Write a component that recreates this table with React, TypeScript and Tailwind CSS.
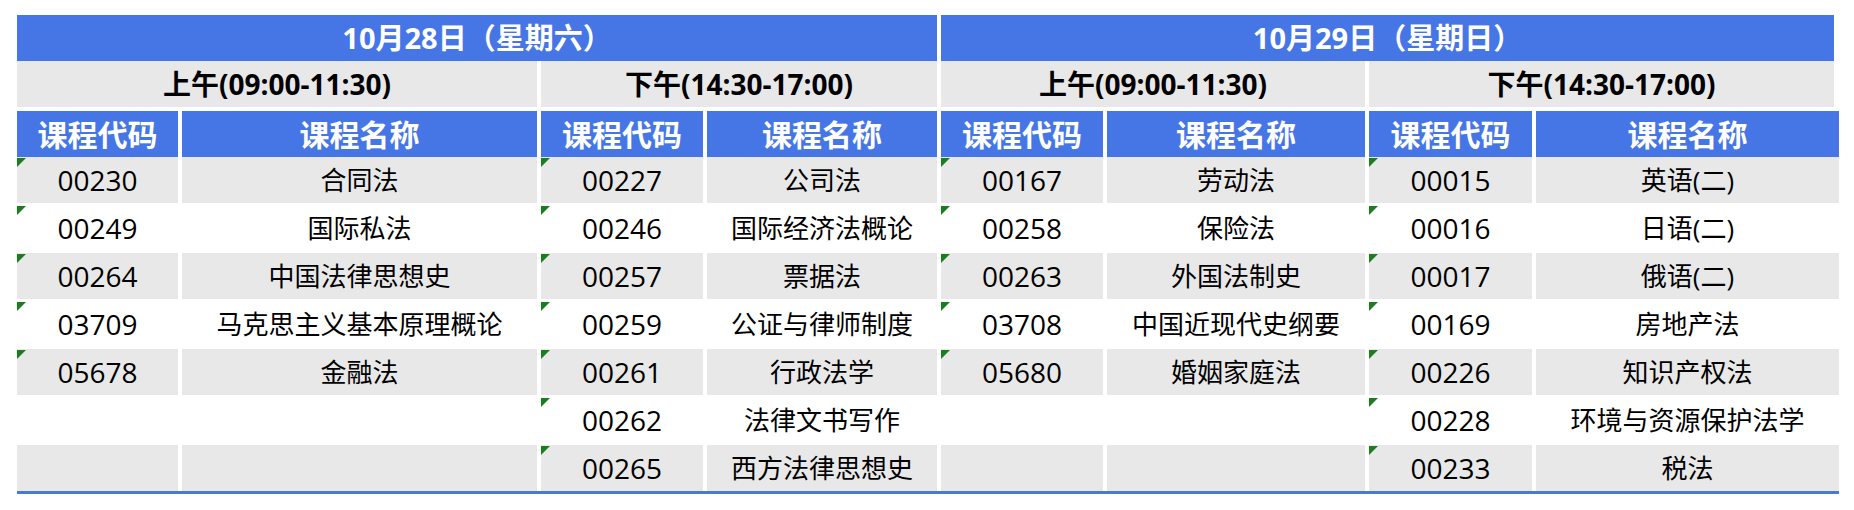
import React from "react";

const GRID =
  "grid grid-cols-[161px_355px_162px_230px_162px_258px_163px_303px] gap-x-[4px]";

type Pair = [string, string] | null;

const am1: Pair[] = [
  ["00230", "合同法"],
  ["00249", "国际私法"],
  ["00264", "中国法律思想史"],
  ["03709", "马克思主义基本原理概论"],
  ["05678", "金融法"],
  null,
  null,
];
const pm1: Pair[] = [
  ["00227", "公司法"],
  ["00246", "国际经济法概论"],
  ["00257", "票据法"],
  ["00259", "公证与律师制度"],
  ["00261", "行政法学"],
  ["00262", "法律文书写作"],
  ["00265", "西方法律思想史"],
];
const am2: Pair[] = [
  ["00167", "劳动法"],
  ["00258", "保险法"],
  ["00263", "外国法制史"],
  ["03708", "中国近现代史纲要"],
  ["05680", "婚姻家庭法"],
  null,
  null,
];
const pm2: Pair[] = [
  ["00015", "英语(二)"],
  ["00016", "日语(二)"],
  ["00017", "俄语(二)"],
  ["00169", "房地产法"],
  ["00226", "知识产权法"],
  ["00228", "环境与资源保护法学"],
  ["00233", "税法"],
];

const FONT = {
  fontFamily: '"Open Sans", "Noto Sans CJK SC", sans-serif',
};

function DataCell({
  text,
  gray,
  tri,
  code,
}: {
  text: string;
  gray: boolean;
  tri?: boolean;
  code?: boolean;
}) {
  return (
    <div
      className={`relative flex h-[46px] items-center justify-center leading-none text-black ${
        gray ? "bg-[#e8e8e8]" : "bg-white"
      } ${code ? "text-[28px]" : "text-[26px]"}`}
    >
      {tri && (
        <div className="absolute left-0 top-[1px] h-0 w-0 border-r-[9px] border-t-[9px] border-r-transparent border-t-[#1b7d1b]" />
      )}
      {text}
    </div>
  );
}

export default function App() {
  const groups = [am1, pm1, am2, pm2];
  return (
    <div className="min-h-[510px] w-[1854px] bg-white pl-[17px] pt-[15px]" style={FONT}>
      <div className="w-[1822px]">
        {/* Day row */}
        <div className={GRID}>
          <div className="col-span-4 flex h-[46px] items-center justify-center bg-[#4676e6] text-[29px] font-bold text-white">
            10月28日（星期六）
          </div>
          <div className="col-span-4 mr-[5px] flex h-[46px] items-center justify-center bg-[#4676e6] text-[29px] font-bold text-white">
            10月29日（星期日）
          </div>
        </div>
        {/* Period row */}
        <div className={GRID}>
          {["上午(09:00-11:30)", "下午(14:30-17:00)", "上午(09:00-11:30)", "下午(14:30-17:00)"].map(
            (p, i) => (
              <div
                key={i}
                className={`col-span-2 flex h-[46px] items-center justify-center bg-[#e8e8e8] text-[28px] font-bold text-black ${
                  i === 3 ? "mr-[5px]" : ""
                }`}
              >
                {p}
              </div>
            )
          )}
        </div>
        {/* Column headers */}
        <div className={`${GRID} mt-[4px]`}>
          {Array.from({ length: 4 }).flatMap((_, i) => [
            <div
              key={`c${i}`}
              className="flex h-[46px] items-center justify-center bg-[#4676e6] text-[30px] font-bold text-white"
            >
              课程代码
            </div>,
            <div
              key={`n${i}`}
              className="flex h-[46px] items-center justify-center bg-[#4676e6] text-[30px] font-bold text-white"
            >
              课程名称
            </div>,
          ])}
        </div>
        {/* Data rows */}
        <div className="flex flex-col gap-y-[2px]">
          {Array.from({ length: 7 }).map((_, r) => {
            const gray = r % 2 === 0;
            return (
              <div key={r} className={GRID}>
                {groups.flatMap((g, gi) => {
                  const item = g[r];
                  return [
                    <DataCell
                      key={`c${gi}`}
                      text={item ? item[0] : ""}
                      gray={gray}
                      tri={!!item}
                      code
                    />,
                    <DataCell key={`n${gi}`} text={item ? item[1] : ""} gray={gray} />,
                  ];
                })}
              </div>
            );
          })}
        </div>
        <div className="h-[3px] w-[1822px] bg-[#4a78d9]" />
      </div>
    </div>
  );
}
